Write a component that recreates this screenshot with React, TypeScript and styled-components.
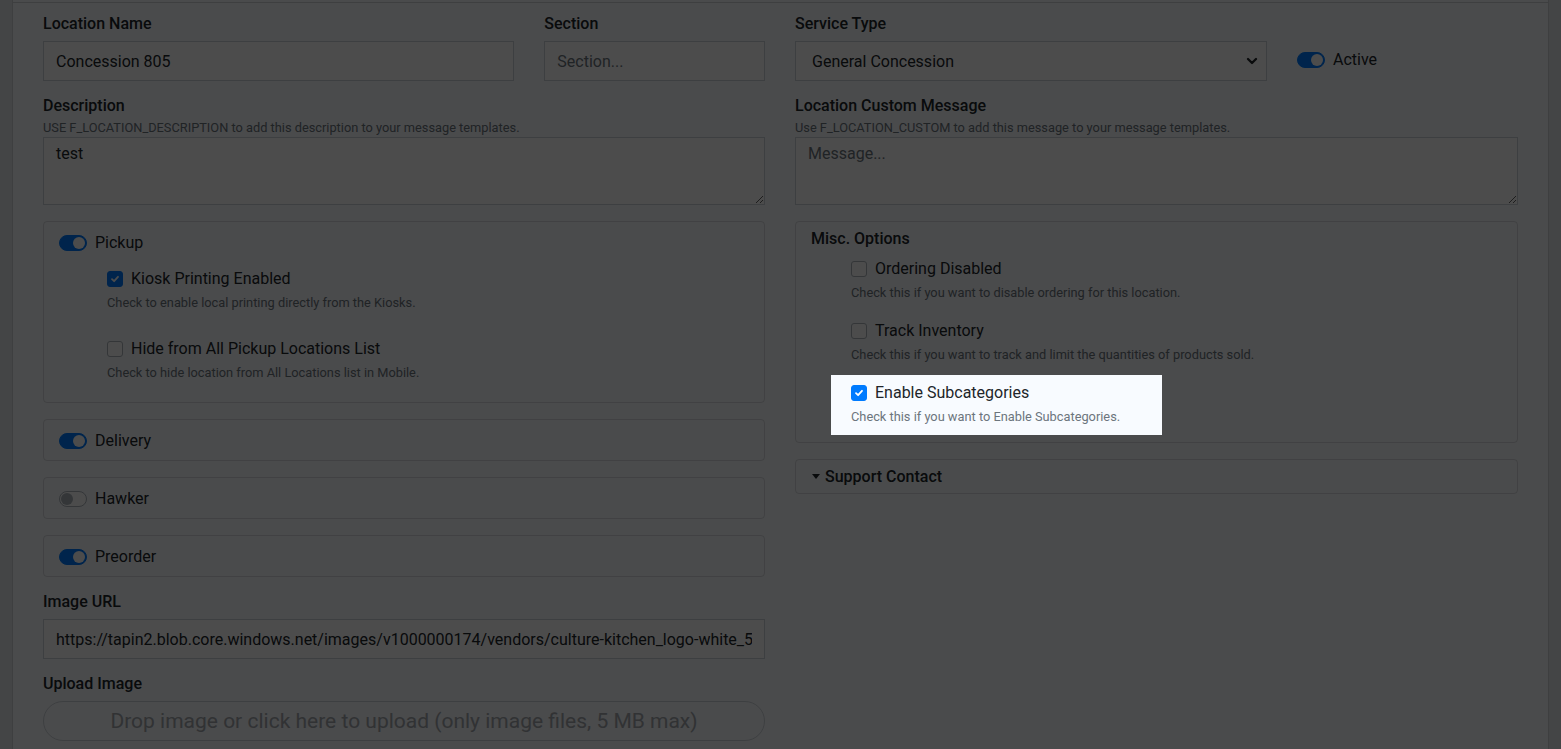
import React from "react";
import styled, { createGlobalStyle } from "styled-components";
import { ChevronDown } from "lucide-react";

const GlobalStyle = createGlobalStyle`
  html, body {
    margin: 0;
    padding: 0;
    height: 749px;
    overflow: hidden;
    background: #e4e6ea;
    font-family: Roboto, "Liberation Sans", Arial, sans-serif;
    color: #212529;
  }
  * { box-sizing: border-box; }
`;

const Page = styled.div`
  padding: 0 12px;
`;

const Card = styled.div`
  background: #f8fbff;
  border-left: 1px solid #cfd3d8;
  border-right: 1px solid #cfd3d8;
  min-height: 760px;
`;

// thin header edge left over from the card above the fold
const CardTop = styled.div`
  height: 3px;
  border-bottom: 1px solid #cfd3d8;
`;

const CardBody = styled.div`
  display: grid;
  grid-template-columns: 722fr 723fr;
  column-gap: 30px;
  padding: 11px 30px 0;
`;

const Column = styled.div`
  display: flex;
  flex-direction: column;
  min-width: 0;
`;

const SplitRow = styled.div`
  display: grid;
  grid-template-columns: calc((100% + 30px) * 8 / 12 - 30px) 1fr;
  column-gap: 30px;
`;

const FieldGroup = styled.div<{ $mb?: number }>`
  margin-bottom: ${(p) => p.$mb ?? 15}px;
  min-width: 0;
`;

const Label = styled.div<{ $gap?: number }>`
  font-size: 16px;
  line-height: 19px;
  font-weight: 500;
  margin-bottom: ${(p) => p.$gap ?? 8}px;
`;

const Help = styled.div`
  font-size: 12.8px;
  line-height: 15px;
  color: #6c757d;
  margin-bottom: 2px;
  white-space: nowrap;
`;

const Input = styled.input`
  display: block;
  width: 100%;
  height: 40px;
  padding: 0 12px;
  border: 1px solid #ced4da;
  border-radius: 0;
  background: #fff;
  font-family: inherit;
  font-size: 16px;
  color: #212529;
  outline: none;
  text-overflow: clip;
  &::placeholder { color: #6c757d; }
`;

const TextArea = styled.textarea`
  display: block;
  width: 100%;
  height: 68px;
  padding: 6px 12px;
  border: 1px solid #ced4da;
  background: #fff;
  font-family: inherit;
  font-size: 16px;
  line-height: 1.2;
  color: #212529;
  resize: vertical;
  outline: none;
  &::placeholder { color: #6c757d; }
`;

const SelectWrap = styled.div`
  position: relative;
  svg {
    position: absolute;
    right: 7px;
    top: 12px;
    pointer-events: none;
  }
`;

const Select = styled.select`
  appearance: none;
  display: block;
  width: 100%;
  height: 40px;
  padding: 0 32px 0 16px;
  border: 1px solid #ced4da;
  border-radius: 0;
  background: #fff;
  font-family: inherit;
  font-size: 16px;
  color: #212529;
  outline: none;
`;

const ActiveCell = styled.div`
  padding-top: 36px;
`;

const SwitchRow = styled.div`
  display: flex;
  align-items: center;
  gap: 8px;
  height: 19px;
  font-size: 16px;
  line-height: 19px;
`;

const Track = styled.span<{ $on: boolean }>`
  position: relative;
  flex: none;
  width: 28px;
  height: 16px;
  border-radius: 8px;
  border: 1px solid ${(p) => (p.$on ? "#007bff" : "#adb5bd")};
  background: ${(p) => (p.$on ? "#007bff" : "#fff")};
  &::after {
    content: "";
    position: absolute;
    top: 1px;
    left: ${(p) => (p.$on ? "13px" : "1px")};
    width: 12px;
    height: 12px;
    border-radius: 50%;
    background: ${(p) => (p.$on ? "#fff" : "#adb5bd")};
  }
`;

const Box = styled.div<{ $pt?: number; $pb?: number; $mb?: number }>`
  border: 1px solid rgba(0, 0, 0, 0.125);
  border-radius: 4px;
  padding: ${(p) => p.$pt ?? 11}px 15px ${(p) => p.$pb ?? 10}px;
  margin-bottom: ${(p) => p.$mb ?? 16}px;
`;

const BoxTitle = styled.div`
  font-size: 16px;
  line-height: 19px;
  font-weight: 500;
`;

const OptionList = styled.div<{ $indent: number; $top: number; $spacing: number; $pb: number }>`
  padding-left: ${(p) => p.$indent}px;
  margin-top: ${(p) => p.$top}px;
  padding-bottom: ${(p) => p.$pb}px;
  display: flex;
  flex-direction: column;
  gap: ${(p) => p.$spacing}px;
`;

const Option = styled.div`
  position: relative;
`;

const OptionLabel = styled.div`
  display: flex;
  align-items: center;
  gap: 8px;
  height: 19px;
  font-size: 16px;
  line-height: 19px;
`;

const OptionHelp = styled(Help)`
  margin: 7px 0 0;
`;

const CheckBox = styled.span<{ $on: boolean }>`
  flex: none;
  width: 16px;
  height: 16px;
  border-radius: 3px;
  border: 1px solid ${(p) => (p.$on ? "#007bff" : "#adb5bd")};
  background: ${(p) => (p.$on ? "#007bff" : "#fff")};
  display: flex;
  align-items: center;
  justify-content: center;
`;

// tour spotlight drawn over the page
const Spotlight = styled.div`
  position: absolute;
  top: -8px;
  left: -20px;
  width: 331px;
  height: 60px;
  box-shadow: 0 0 0 9999px rgba(0, 0, 0, 0.7);
  z-index: 10;
  pointer-events: none;
`;

const Collapse = styled.div`
  display: flex;
  align-items: center;
  gap: 5px;
  border: 1px solid rgba(0, 0, 0, 0.125);
  border-radius: 4px;
  padding: 7px 16px;
  font-size: 16px;
  line-height: 19px;
  font-weight: 500;
`;

const Caret = styled.span`
  width: 0;
  height: 0;
  border-left: 4px solid transparent;
  border-right: 4px solid transparent;
  border-top: 5px solid #212529;
`;

const DropZone = styled.div`
  height: 40px;
  border: 1px solid #ced4da;
  border-radius: 20px;
  display: flex;
  align-items: center;
  justify-content: center;
  font-size: 21px;
  color: #a4a8ad;
  white-space: nowrap;
  overflow: hidden;
`;

const Check = () => (
  <svg width="10" height="10" viewBox="0 0 10 10">
    <path d="M2 5.2 L4.1 7.2 L8 2.8" fill="none" stroke="#fff" strokeWidth="1.8" strokeLinecap="round" strokeLinejoin="round" />
  </svg>
);

type CheckOptionProps = {
  label: string;
  help: string;
  checked?: boolean;
  spotlight?: boolean;
};

const CheckOption = ({ label, help, checked = false, spotlight }: CheckOptionProps) => (
  <Option>
    {spotlight && <Spotlight />}
    <OptionLabel>
      <CheckBox $on={checked}>{checked && <Check />}</CheckBox>
      {label}
    </OptionLabel>
    <OptionHelp>{help}</OptionHelp>
  </Option>
);

const Toggle = ({ on, label }: { on: boolean; label: string }) => (
  <SwitchRow>
    <Track $on={on} />
    {label}
  </SwitchRow>
);

export default function App() {
  return (
    <Page>
      <GlobalStyle />
      <Card>
        <CardTop />
        <CardBody>
          <Column>
            <SplitRow>
              <FieldGroup>
                <Label>Location Name</Label>
                <Input defaultValue="Concession 805" />
              </FieldGroup>
              <FieldGroup>
                <Label>Section</Label>
                <Input placeholder="Section..." />
              </FieldGroup>
            </SplitRow>
            <FieldGroup $mb={16}>
              <Label $gap={5}>Description</Label>
              <Help>USE F_LOCATION_DESCRIPTION to add this description to your message templates.</Help>
              <TextArea defaultValue="test" />
            </FieldGroup>

            <Box>
              <Toggle on label="Pickup" />
              <OptionList $indent={48} $top={17} $spacing={29} $pb={12}>
                <CheckOption checked label="Kiosk Printing Enabled" help="Check to enable local printing directly from the Kiosks." />
                <CheckOption label="Hide from All Pickup Locations List" help="Check to hide location from All Locations list in Mobile." />
              </OptionList>
            </Box>
            <Box>
              <Toggle on label="Delivery" />
            </Box>
            <Box>
              <Toggle on={false} label="Hawker" />
            </Box>
            <Box $mb={15}>
              <Toggle on label="Preorder" />
            </Box>

            <FieldGroup>
              <Label>Image URL</Label>
              <Input defaultValue="https://tapin2.blob.core.windows.net/images/v1000000174/vendors/culture-kitchen_logo-white_5" />
            </FieldGroup>
            <FieldGroup>
              <Label>Upload Image</Label>
              <DropZone>Drop image or click here to upload (only image files, 5 MB max)</DropZone>
            </FieldGroup>
          </Column>

          <Column>
            <SplitRow>
              <FieldGroup>
                <Label>Service Type</Label>
                <SelectWrap>
                  <Select defaultValue="general">
                    <option value="general">General Concession</option>
                  </Select>
                  <ChevronDown size={16} strokeWidth={3.5} color="#212529" />
                </SelectWrap>
              </FieldGroup>
              <ActiveCell>
                <Toggle on label="Active" />
              </ActiveCell>
            </SplitRow>
            <FieldGroup $mb={16}>
              <Label $gap={5}>Location Custom Message</Label>
              <Help>Use F_LOCATION_CUSTOM to add this message to your message templates.</Help>
              <TextArea placeholder="Message..." />
            </FieldGroup>

            <Box $pt={7} $pb={8}>
              <BoxTitle>Misc. Options</BoxTitle>
              <OptionList $indent={40} $top={11} $spacing={21} $pb={10}>
                <CheckOption label="Ordering Disabled" help="Check this if you want to disable ordering for this location." />
                <CheckOption label="Track Inventory" help="Check this if you want to track and limit the quantities of products sold." />
                <CheckOption checked spotlight label="Enable Subcategories" help="Check this if you want to Enable Subcategories." />
              </OptionList>
            </Box>

            <Collapse>
              <Caret />
              Support Contact
            </Collapse>
          </Column>
        </CardBody>
      </Card>
    </Page>
  );
}
